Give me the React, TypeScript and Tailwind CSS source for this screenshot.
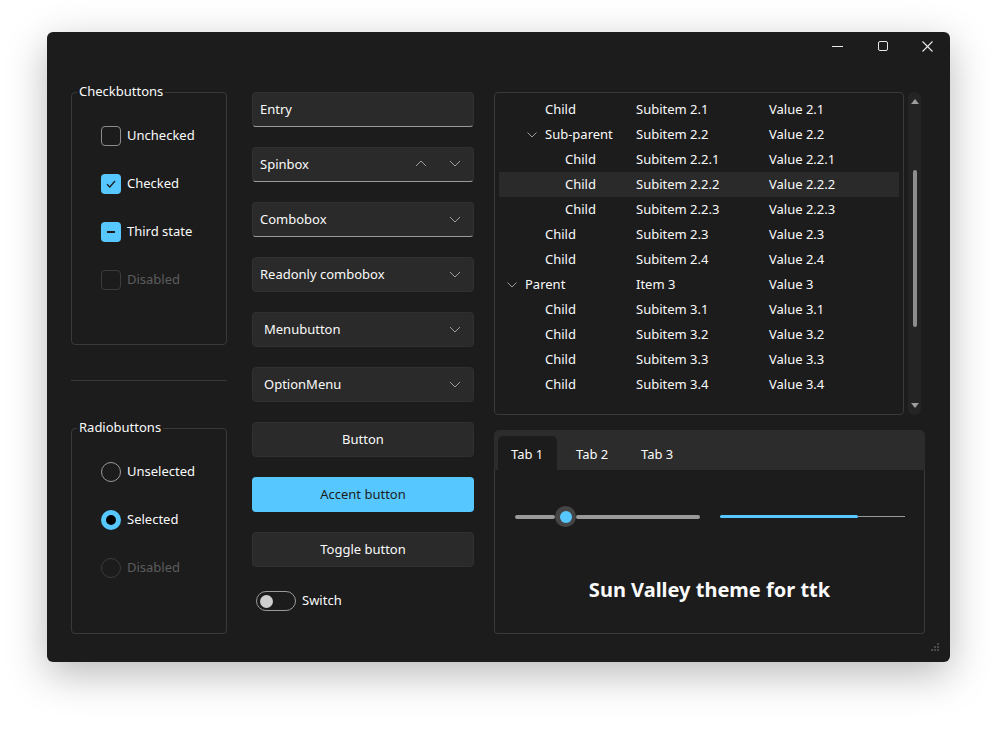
import React from 'react';

const font = { fontFamily: '"Noto Sans", "Open Sans", sans-serif' };

const Chevron = ({ up = false }: { up?: boolean }) => (
  <svg width="12" height="7" viewBox="0 0 12 7" className="text-[#9d9d9d]">
    <path d={up ? 'M1 6 L6 1 L11 6' : 'M1 1 L6 6 L11 1'} fill="none" stroke="currentColor" strokeWidth="1" />
  </svg>
);

const TreeChevron = () => (
  <svg width="10" height="6" viewBox="0 0 10 6" className="text-[#9d9d9d]">
    <path d="M0.5 0.5 L5 5 L9.5 0.5" fill="none" stroke="currentColor" strokeWidth="1" />
  </svg>
);

const Labelframe = ({ title, height, children }: { title: string; height: string; children: React.ReactNode }) => (
  <div className={`relative border border-[#393939] rounded-[4px] ${height}`}>
    <span className="absolute -top-[11px] left-[5px] px-[2px] bg-[#1c1c1c] text-[13px] leading-[18px] text-[#fafafa]">{title}</span>
    {children}
  </div>
);

const CheckRow = ({ state, label }: { state: 'off' | 'on' | 'mixed' | 'disabled'; label: string }) => {
  let box = 'border border-[#8b8b8b]';
  if (state === 'on' || state === 'mixed') box = 'bg-[#57c8ff]';
  if (state === 'disabled') box = 'border border-[#3c3c3c]';
  return (
    <div className="flex items-center h-[20px] gap-[6px]">
      <div className={`w-[20px] h-[20px] rounded-[4px] flex items-center justify-center ${box}`}>
        {state === 'on' && (
          <svg width="10" height="8" viewBox="0 0 10 8">
            <path d="M1 4.2 L3.8 7 L9 1" fill="none" stroke="#1c1c1c" strokeWidth="1.3" />
          </svg>
        )}
        {state === 'mixed' && <div className="w-[8px] h-[2px] bg-[#1c1c1c]" />}
      </div>
      <span className={`text-[13px] ${state === 'disabled' ? 'text-[#5c5c5c]' : 'text-[#fafafa]'}`}>{label}</span>
    </div>
  );
};

const RadioRow = ({ state, label }: { state: 'off' | 'on' | 'disabled'; label: string }) => {
  let c = 'border border-[#9a9a9a]';
  if (state === 'on') c = 'border-[5px] border-[#57c8ff] bg-black';
  if (state === 'disabled') c = 'border border-[#3c3c3c]';
  return (
    <div className="flex items-center h-[20px] gap-[6px]">
      <div className={`w-[20px] h-[20px] rounded-full ${c}`} />
      <span className={`text-[13px] ${state === 'disabled' ? 'text-[#5c5c5c]' : 'text-[#fafafa]'}`}>{label}</span>
    </div>
  );
};

const Field = ({ text, underline, pl = 'pl-[7px]', children }: { text: string; underline?: boolean; pl?: string; children?: React.ReactNode }) => (
  <div
    className={`h-[35px] rounded-[4px] bg-[#2a2a2a] border border-[#303030] flex items-center ${pl} pr-[12px] ${
      underline ? 'border-b-[#9a9a9a]' : ''
    }`}
  >
    <span className="text-[13px] text-[#fafafa] flex-1">{text}</span>
    {children}
  </div>
);

const Btn = ({ text, accent }: { text: string; accent?: boolean }) => (
  <div
    className={`h-[35px] rounded-[4px] flex items-center justify-center text-[13px] ${
      accent ? 'bg-[#57c8ff] text-[#1c1c1c]' : 'bg-[#2a2a2a] border border-[#303030] text-[#fafafa]'
    }`}
  >
    {text}
  </div>
);

type Row = { level: number; name: string; item: string; value: string; open?: boolean; sel?: boolean };

const rows: Row[] = [
  { level: 1, name: 'Child', item: 'Subitem 2.1', value: 'Value 2.1' },
  { level: 1, name: 'Sub-parent', item: 'Subitem 2.2', value: 'Value 2.2', open: true },
  { level: 2, name: 'Child', item: 'Subitem 2.2.1', value: 'Value 2.2.1' },
  { level: 2, name: 'Child', item: 'Subitem 2.2.2', value: 'Value 2.2.2', sel: true },
  { level: 2, name: 'Child', item: 'Subitem 2.2.3', value: 'Value 2.2.3' },
  { level: 1, name: 'Child', item: 'Subitem 2.3', value: 'Value 2.3' },
  { level: 1, name: 'Child', item: 'Subitem 2.4', value: 'Value 2.4' },
  { level: 0, name: 'Parent', item: 'Item 3', value: 'Value 3', open: true },
  { level: 1, name: 'Child', item: 'Subitem 3.1', value: 'Value 3.1' },
  { level: 1, name: 'Child', item: 'Subitem 3.2', value: 'Value 3.2' },
  { level: 1, name: 'Child', item: 'Subitem 3.3', value: 'Value 3.3' },
  { level: 1, name: 'Child', item: 'Subitem 3.4', value: 'Value 3.4' },
];

const indent = ['pl-[26px]', 'pl-[46px]', 'pl-[66px]'];
const chevPad = ['pl-[8px]', 'pl-[28px]', 'pl-[48px]'];

const Tab = ({ label, active }: { label: string; active?: boolean }) => (
  <div
    className={`h-[34px] w-[59px] rounded-t-[5px] flex items-center pl-[13px] pt-[4px] text-[13px] text-[#fafafa] ${
      active ? 'bg-[#1c1c1c]' : ''
    }`}
  >
    {label}
  </div>
);

export default function App() {
  return (
    <div className="w-[997px] h-[739px] bg-white pt-[32px] pl-[47px]" style={font}>
      <div className="w-[903px] h-[630px] bg-[#1c1c1c] rounded-[6px] shadow-[0_12px_40px_rgba(0,0,0,0.28)] flex flex-col relative">
        {/* title bar */}
        <div className="h-[28px] flex justify-end">
          <div className="w-[45px] flex items-center justify-center">
            <div className="w-[11px] h-[1px] bg-[#e8e8e8]" />
          </div>
          <div className="w-[45px] flex items-center justify-center">
            <div className="w-[10px] h-[10px] border border-[#e8e8e8] rounded-[2px]" />
          </div>
          <div className="w-[45px] flex items-center justify-center">
            <svg width="11" height="11" viewBox="0 0 11 11">
              <path d="M0.5 0.5 L10.5 10.5 M10.5 0.5 L0.5 10.5" stroke="#e8e8e8" strokeWidth="1.1" />
            </svg>
          </div>
        </div>

        <div className="flex pl-[24px] pt-[32px]">
          {/* column 1 */}
          <div className="w-[156px] flex flex-col">
            <Labelframe title="Checkbuttons" height="h-[253px]">
              <div className="flex flex-col gap-[28px] pl-[29px] pt-[33px]">
                <CheckRow state="off" label="Unchecked" />
                <CheckRow state="on" label="Checked" />
                <CheckRow state="mixed" label="Third state" />
                <CheckRow state="disabled" label="Disabled" />
              </div>
            </Labelframe>
            <div className="h-[1px] bg-[#393939] mt-[35px] mb-[47px]" />
            <Labelframe title="Radiobuttons" height="h-[206px]">
              <div className="flex flex-col gap-[28px] pl-[29px] pt-[33px]">
                <RadioRow state="off" label="Unselected" />
                <RadioRow state="on" label="Selected" />
                <RadioRow state="disabled" label="Disabled" />
              </div>
            </Labelframe>
          </div>

          {/* column 2 */}
          <div className="w-[222px] ml-[25px] flex flex-col gap-[20px]">
            <Field text="Entry" underline />
            <Field text="Spinbox" underline>
              <div className="flex items-center gap-[22px] pb-[2px]">
                <Chevron up />
                <Chevron />
              </div>
            </Field>
            <Field text="Combobox" underline>
              <Chevron />
            </Field>
            <Field text="Readonly combobox">
              <Chevron />
            </Field>
            <Field text="Menubutton" pl="pl-[11px]">
              <Chevron />
            </Field>
            <Field text="OptionMenu" pl="pl-[11px]">
              <Chevron />
            </Field>
            <Btn text="Button" />
            <Btn text="Accent button" accent />
            <Btn text="Toggle button" />
            <div className="flex items-center gap-[6px] pl-[4px] mt-[4px]">
              <div className="w-[40px] h-[20px] rounded-full border border-[#9a9a9a] flex items-center pl-[3px]">
                <div className="w-[13px] h-[13px] rounded-full bg-[#cfcfcf]" />
              </div>
              <span className="text-[13px] text-[#fafafa]">Switch</span>
            </div>
          </div>

          {/* column 3 */}
          <div className="w-[431px] ml-[20px] flex flex-col">
            <div className="flex h-[323px]">
              <div className="w-[410px] border border-[#393939] rounded-[4px] pt-[4px] px-[4px]">
                {rows.map((r, i) => (
                  <div key={i} className={`h-[25px] flex items-center text-[13px] text-[#fafafa] ${r.sel ? 'bg-[#2a2a2a]' : ''}`}>
                    <div className={`w-[137px] flex items-center ${r.open ? chevPad[r.level] : indent[r.level]}`}>
                      {r.open && (
                        <span className="w-[18px] flex">
                          <TreeChevron />
                        </span>
                      )}
                      <span>{r.name}</span>
                    </div>
                    <div className="w-[133px]">{r.item}</div>
                    <div>{r.value}</div>
                  </div>
                ))}
              </div>
              <div className="w-[13px] ml-[4px] rounded-[6px] bg-[#242424] flex flex-col items-center py-[6px]">
                <svg width="8" height="6" viewBox="0 0 8 6">
                  <path d="M0 6 L4 1 L8 6 Z" fill="#9d9d9d" />
                </svg>
                <div className="flex-1 w-full flex flex-col items-center pt-[66px] pb-[76px]">
                  <div className="w-[4px] flex-1 rounded-full bg-[#8e8e8e]" />
                </div>
                <svg width="8" height="6" viewBox="0 0 8 6">
                  <path d="M0 0 L8 0 L4 5 Z" fill="#9d9d9d" />
                </svg>
              </div>
            </div>

            {/* notebook */}
            <div className="mt-[15px] h-[204px] flex flex-col">
              <div className="h-[40px] bg-[#2c2c2c] rounded-t-[5px] flex items-end gap-[6px] pl-[4px]">
                <Tab label="Tab 1" active />
                <Tab label="Tab 2" />
                <Tab label="Tab 3" />
              </div>
              <div className="flex-1 border border-t-0 border-[#393939] rounded-b-[4px] flex flex-col">
                <div className="flex items-center h-[21px] mt-[36px] pl-[20px]">
                  <div className="w-[185px] flex items-center">
                    <div className="w-[40px] h-[4px] rounded-full bg-[#9a9a9a]" />
                    <div className="w-[21px] h-[21px] rounded-full bg-[#454545] flex items-center justify-center">
                      <div className="w-[12px] h-[12px] rounded-full bg-[#57c8ff]" />
                    </div>
                    <div className="flex-1 h-[4px] rounded-full bg-[#9a9a9a]" />
                  </div>
                  <div className="w-[185px] ml-[20px] flex items-center">
                    <div className="w-[138px] h-[3px] rounded-full bg-[#57c8ff]" />
                    <div className="flex-1 h-[1px] bg-[#9a9a9a]" />
                  </div>
                </div>
                <div className="mt-[49px] flex justify-center">
                  <span className="text-[20px] leading-[28px] font-bold text-[#fafafa]">Sun Valley theme for ttk</span>
                </div>
              </div>
            </div>
          </div>
        </div>

        {/* resize grip */}
        <div className="absolute right-[10px] bottom-[10px]">
          <svg width="9" height="9" viewBox="0 0 9 9" fill="#4a4a4a">
            <rect x="6" y="0" width="2" height="2" />
            <rect x="3" y="3" width="2" height="2" />
            <rect x="6" y="3" width="2" height="2" />
            <rect x="0" y="6" width="2" height="2" />
            <rect x="3" y="6" width="2" height="2" />
            <rect x="6" y="6" width="2" height="2" />
          </svg>
        </div>
      </div>
    </div>
  );
}
